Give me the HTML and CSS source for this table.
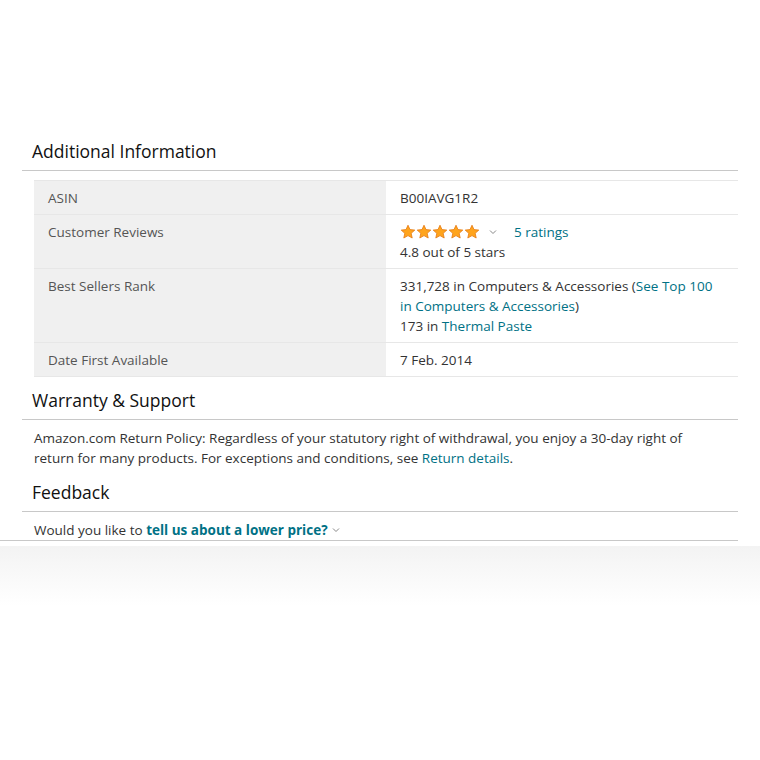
FILE: index.html
```html
<!DOCTYPE html>
<html lang="en">
<head>
    <meta charset="UTF-8">
    <title>Additional Information</title>
    <link rel="stylesheet" href="styles.css">
</head>
<body>
    <div class="page">
        <h2 class="section-title">Additional Information</h2>
        <table class="info-table">
            <tr>
                <th>ASIN</th>
                <td>B00IAVG1R2</td>
            </tr>
            <tr>
                <th>Customer Reviews</th>
                <td>
                    <div class="rating-line">
                        <span class="stars">
                            <svg viewBox="0 0 16 16" width="16" height="16"><path d="M8 1.2l2 4.4 4.8.5-3.6 3.2 1 4.7L8 11.6 3.8 14l1-4.7L1.2 6.1 6 5.6z"/></svg>
                            <svg viewBox="0 0 16 16" width="16" height="16"><path d="M8 1.2l2 4.4 4.8.5-3.6 3.2 1 4.7L8 11.6 3.8 14l1-4.7L1.2 6.1 6 5.6z"/></svg>
                            <svg viewBox="0 0 16 16" width="16" height="16"><path d="M8 1.2l2 4.4 4.8.5-3.6 3.2 1 4.7L8 11.6 3.8 14l1-4.7L1.2 6.1 6 5.6z"/></svg>
                            <svg viewBox="0 0 16 16" width="16" height="16"><path d="M8 1.2l2 4.4 4.8.5-3.6 3.2 1 4.7L8 11.6 3.8 14l1-4.7L1.2 6.1 6 5.6z"/></svg>
                            <svg viewBox="0 0 16 16" width="16" height="16"><path d="M8 1.2l2 4.4 4.8.5-3.6 3.2 1 4.7L8 11.6 3.8 14l1-4.7L1.2 6.1 6 5.6z"/></svg>
                        </span>
                        <svg class="chevron" viewBox="0 0 8 6" width="8" height="6"><path d="M1 1.5l3 3 3-3"/></svg>
                        <a class="link ratings" href="#">5 ratings</a>
                    </div>
                    <div>4.8 out of 5 stars</div>
                </td>
            </tr>
            <tr>
                <th>Best Sellers Rank</th>
                <td>331,728 in Computers &amp; Accessories (<a class="link" href="#">See Top 100 in Computers &amp; Accessories</a>)<br>173 in <a class="link" href="#">Thermal Paste</a></td>
            </tr>
            <tr>
                <th>Date First Available</th>
                <td>7 Feb. 2014</td>
            </tr>
        </table>

        <h2 class="section-title">Warranty &amp; Support</h2>
        <p class="note">Amazon.com Return Policy: Regardless of your statutory right of withdrawal, you enjoy a 30-day right of return for many products. For exceptions and conditions, see <a class="link" href="#">Return details</a>.</p>

        <h2 class="section-title">Feedback</h2>
    </div>
    <div class="feedback-row">
        <p class="feedback">Would you like to <a class="link strong" href="#">tell us about a lower price?</a><svg class="chevron" viewBox="0 0 8 6" width="8" height="6"><path d="M1 1.5l3 3 3-3"/></svg></p>
    </div>
    <div class="fade"></div>
</body>
</html>
```

FILE: styles.css
```css
body {
    margin: 0;
    background: #fff;
    color: #333;
    font-family: "Open Sans", "Liberation Sans", Arial, sans-serif;
    font-size: 13.5px;
    line-height: 20px;
}
.page {
    width: 716px;
    margin-left: 22px;
    padding-top: 139px;
}
.section-title {
    margin: 0;
    padding: 0 0 7px 10px;
    font-size: 17.5px;
    font-weight: 400;
    line-height: 24px;
    color: #111;
    border-bottom: 1px solid #c8c8c8;
}
.info-table {
    margin: 9px 0 11px 12px;
    width: 704px;
    border-collapse: collapse;
    border-top: 1px solid #e7e7e7;
}
.info-table tr {
    border-bottom: 1px solid #e7e7e7;
}
.info-table th,
.info-table td {
    padding: 7px 14px 6px;
    text-align: left;
    vertical-align: top;
}
.info-table th {
    width: 324px;
    background: #f0f0f0;
    font-weight: 400;
    color: #555;
}
.rating-line {
    display: flex;
    align-items: center;
}
.stars {
    display: flex;
}
.stars svg {
    fill: #ffa41c;
    stroke: #e47911;
    stroke-width: 0.8;
    stroke-linejoin: round;
}
.chevron {
    fill: none;
    stroke: #888;
    stroke-width: 1;
    margin: 0 6px 0 9px;
}
.ratings {
    margin-left: 11px;
}
.link {
    color: #007185;
    text-decoration: none;
}
.strong {
    font-weight: 700;
}
.note {
    margin: 8px 30px 12px 12px;
}
.feedback-row {
    width: 738px;
    border-bottom: 1px solid #c8c8c8;
}
.feedback {
    margin: 0;
    padding: 8px 0 0 34px;
}
.feedback .chevron {
    margin: 0 0 2px 4px;
}
.fade {
    height: 60px;
    margin-top: 5px;
    background: linear-gradient(#f3f3f3, #fff);
}
```
